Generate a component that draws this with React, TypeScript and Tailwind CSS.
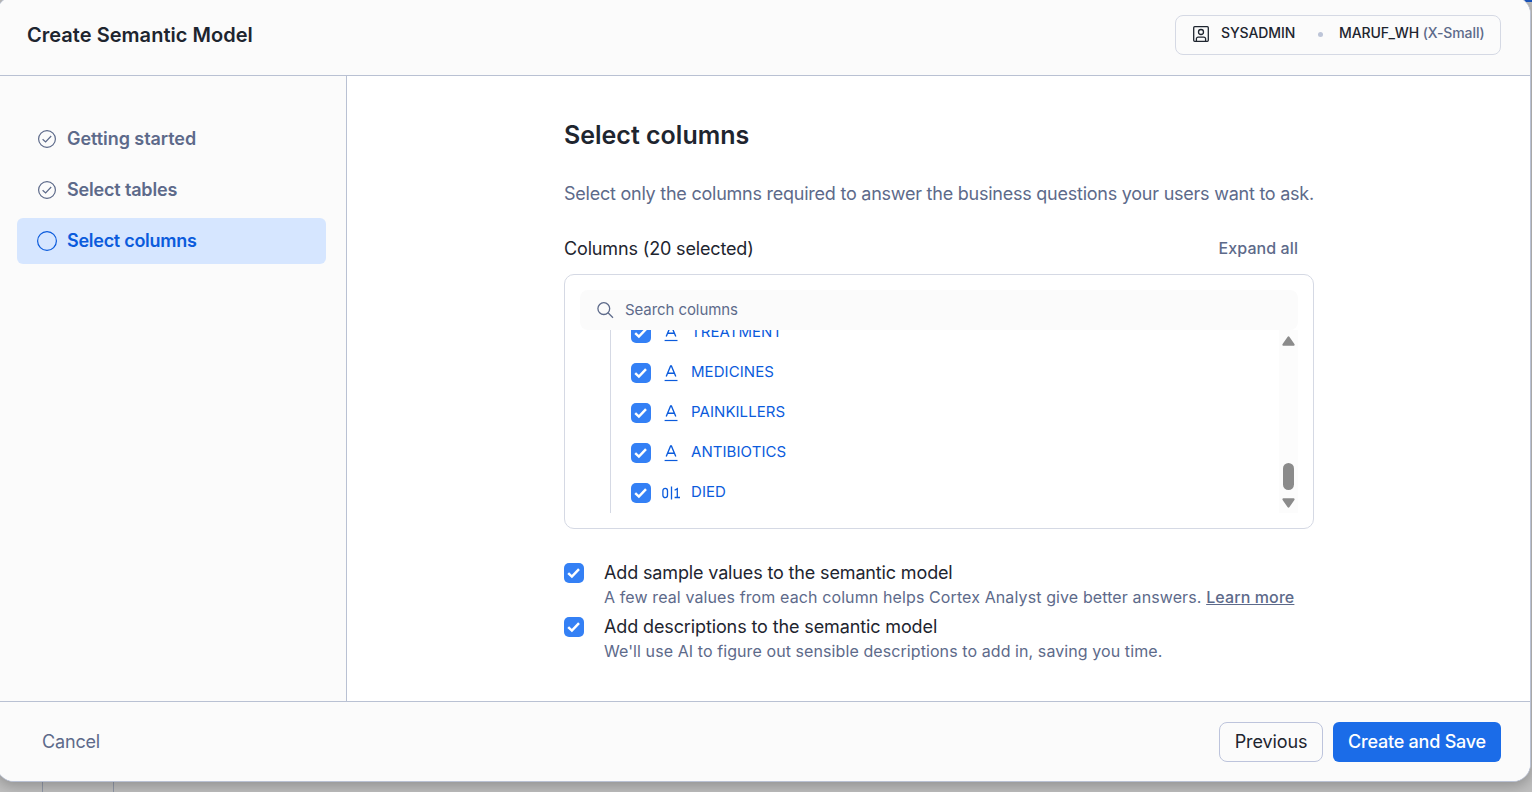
import React from "react";

type IconProps = { className?: string };

const CheckedBox = ({ className = "" }: IconProps) => (
  <span className={`flex h-5 w-5 shrink-0 items-center justify-center rounded-[5px] bg-[#3480f5] ${className}`}>
    <svg width="14" height="12" viewBox="0 0 14 12" fill="none" stroke="#fff" strokeWidth="2.5">
      <path d="M1.2 6.2 4.9 9.6 12 2.2" />
    </svg>
  </span>
);

const StepDone = () => (
  <svg className="h-5 w-5 shrink-0" viewBox="0 0 20 20" fill="none" stroke="#5d6a8a" strokeWidth="1.2">
    <circle cx="10" cy="10" r="8.4" />
    <path d="M5.6 10.2 8.6 13 14.2 7" />
  </svg>
);

const StepCurrent = () => (
  <svg className="h-5 w-5 shrink-0" viewBox="0 0 20 20" fill="none" stroke="#0b5bdc" strokeWidth="1.2">
    <circle cx="10" cy="10" r="9.4" />
  </svg>
);

const RoleIcon = () => (
  <svg className="h-4 w-4 shrink-0" viewBox="0 0 16 16" fill="none" stroke="#1e252f" strokeWidth="1.3">
    <rect x="0.7" y="0.7" width="14.6" height="14.6" rx="1" />
    <circle cx="8" cy="6" r="2.5" />
    <path d="M3.4 15v-2.2a1.7 1.7 0 0 1 1.7-1.7h5.8a1.7 1.7 0 0 1 1.7 1.7V15" />
  </svg>
);

const SearchIcon = () => (
  <svg className="h-[18px] w-[18px] shrink-0" viewBox="0 0 18 18" fill="none" stroke="#5d6a8a" strokeWidth="1.3">
    <circle cx="7.8" cy="7.6" r="5.9" />
    <path d="M12 11.8 17 16.8" />
  </svg>
);

const TextTypeIcon = () => (
  <svg className="h-[18px] w-5 shrink-0" viewBox="0 0 20 18" fill="none" stroke="#0b5bdc" strokeWidth="1.35">
    <path d="M5.2 12.6 9.6 2h.8l4.4 10.6M6.7 9.2h6.6" />
    <path d="M3.6 16.5h12.9" strokeWidth="1.2" />
  </svg>
);

const BooleanTypeIcon = () => (
  <svg className="h-[18px] w-5 shrink-0" viewBox="0 0 20 18" fill="none" stroke="#0b5bdc" strokeWidth="1.3">
    <rect x="1.9" y="4.4" width="4.6" height="9.2" rx="2.3" />
    <path d="M10.5 2.6v12.8M13.6 6.2 16.3 4.6v9M13.6 13.5h5.4" />
  </svg>
);

const steps = [
  { label: "Getting started", done: true, tracking: "tracking-[-0.06px]" },
  { label: "Select tables", done: true, tracking: "tracking-[-0.17px]" },
  { label: "Select columns", done: false, tracking: "tracking-[-0.27px]" },
];

const columns = [
  { name: "TREATMENT", type: "text" },
  { name: "MEDICINES", type: "text" },
  { name: "PAINKILLERS", type: "text" },
  { name: "ANTIBIOTICS", type: "text" },
  { name: "DIED", type: "boolean" },
];

export default function App() {
  return (
    <div className="relative h-[792px] w-[1532px] overflow-hidden bg-[#bfbfbf] font-['Inter',sans-serif] text-[#1e252f]">
      <div className="absolute top-0 right-0 h-0.5 w-5 bg-[#1a56c0]" />
      <div className="absolute bottom-0 left-[42px] h-3 w-[72px] border-x border-x-[#9299a8]" />

      <div className="absolute -top-1 -left-1 flex h-[786px] w-[1535px] flex-col overflow-hidden rounded-[18px] border border-[#b9c1d3] bg-white pt-[3px] pl-[3px] shadow-[0_4px_14px_rgba(0,0,0,0.25)]">
        <header className="flex h-[76px] shrink-0 items-start justify-between border-b border-[#b9c1d3] bg-[#fbfbfb] pr-[29px] pl-[27px]">
          <h1 className="mt-[21px] text-xl leading-7 font-semibold tracking-[0.03px] whitespace-nowrap">Create Semantic Model</h1>
          <div className="mt-[15px] flex h-10 w-[326px] items-center rounded-lg border border-[#d5d9e4] pb-0.5 pl-[17px] text-sm font-medium tracking-[-0.1px] whitespace-nowrap">
            <RoleIcon />
            <span className="mb-0.5 ml-3 w-[97px]">SYSADMIN</span>
            <span className="mr-4 h-[5px] w-[5px] rounded-full bg-[#bdc5d8]" />
            <span className="mb-0.5">
              MARUF_WH <span className="text-[#5d6a8a]">(X-Small)</span>
            </span>
          </div>
        </header>

        <div className="flex h-[625px] shrink-0">
          <nav className="flex w-[347px] shrink-0 flex-col gap-[5px] border-r border-[#b9c1d3] bg-[#fbfbfb] pt-10 pr-5 pl-[17px]">
            {steps.map((step) => (
              <a
                key={step.label}
                className={`flex h-[46px] items-center gap-2.5 rounded-md pl-5 text-lg font-semibold whitespace-nowrap ${step.tracking} ${
                  step.done ? "text-[#5d6a8a]" : "bg-[#d6e6ff] text-[#0b5bdc]"
                }`}
              >
                {step.done ? <StepDone /> : <StepCurrent />}
                {step.label}
              </a>
            ))}
          </nav>

          <main className="flex w-[967px] flex-col pl-[217px] whitespace-nowrap">
            <h2 className="mt-[41px] text-[25px] leading-9 font-semibold">Select columns</h2>
            <p className="mt-[27px] text-lg leading-7 tracking-[-0.24px] text-[#5d6a8a]">
              Select only the columns required to answer the business questions your users want to ask.
            </p>
            <div className="mt-[27px] flex h-7 items-center justify-between pr-4">
              <span className="text-lg tracking-[-0.15px]">Columns (20 selected)</span>
              <span className="mb-0.5 text-base font-medium tracking-[0.08px] text-[#5d6a8a]">Expand all</span>
            </div>

            <section className="mt-[11px] flex h-[255px] w-[750px] flex-col rounded-[10px] border border-[#d5d9e4] px-[15px] pt-[15px]">
              <div className="flex h-10 shrink-0 items-center gap-[11px] rounded-lg bg-[#fbfbfb] pl-4 text-[15px] tracking-[-0.08px] text-[#5d6a8a]">
                <SearchIcon />
                Search columns
              </div>
              <div className="flex h-[183px] overflow-hidden">
                <ul className="ml-[30px] flex flex-1 flex-col border-l border-[#d5d9e4]">
                  {columns.map((column, index) => (
                    <li
                      key={column.name}
                      className={`flex h-10 shrink-0 items-center pl-5 text-[15px] tracking-[0.06px] text-[#0b5bdc] ${index === 0 ? "-mt-[17px]" : ""}`}
                    >
                      <CheckedBox />
                      <span className="ml-2.5">{column.type === "text" ? <TextTypeIcon /> : <BooleanTypeIcon />}</span>
                      <span className="mb-px ml-2.5">{column.name}</span>
                    </li>
                  ))}
                </ul>
                <div className="flex w-[19px] flex-col items-center bg-[#fcfcfc] pt-1.5">
                  <svg width="13" height="10" viewBox="0 0 13 10" fill="#8b8b8b">
                    <path d="M5.5.9a1.2 1.2 0 0 1 2 0l4.9 7.2a1 1 0 0 1-.9 1.6h-10a1 1 0 0 1-.9-1.6z" />
                  </svg>
                  <div className="mt-[117px] h-[27px] w-[11px] rounded-full bg-[#8b8b8b]" />
                  <svg className="mt-2" width="13" height="10" viewBox="0 0 13 10" fill="#8b8b8b">
                    <path d="M5.5 9.1a1.2 1.2 0 0 0 2 0l4.9-7.2a1 1 0 0 0-.9-1.6h-10a1 1 0 0 0-.9 1.6z" />
                  </svg>
                </div>
              </div>
            </section>

            <div className="mt-[30px] flex gap-5">
              <CheckedBox className="mt-1" />
              <div>
                <p className="text-lg leading-7 tracking-[-0.145px]">Add sample values to the semantic model</p>
                <p className="text-base leading-5 tracking-[0.11px] text-[#5d6a8a]">
                  A few real values from each column helps Cortex Analyst give better answers.{" "}
                  <a className="font-medium underline">Learn more</a>
                </p>
              </div>
            </div>
            <div className="mt-1.5 flex gap-5">
              <CheckedBox className="mt-1" />
              <div>
                <p className="text-lg leading-7 tracking-[-0.12px]">Add descriptions to the semantic model</p>
                <p className="text-base leading-5 tracking-[0.085px] text-[#5d6a8a]">
                  We'll use AI to figure out sensible descriptions to add in, saving you time.
                </p>
              </div>
            </div>
          </main>
        </div>

        <footer className="flex h-20 shrink-0 items-center border-t border-[#b9c1d3] bg-[#fbfbfb] pr-[29px] pl-[42px] text-lg whitespace-nowrap">
          <button className="mr-auto tracking-[-0.17px] text-[#5d6a8a]">Cancel</button>
          <button className="h-10 w-[104px] rounded-lg border border-[#bdc4dc] tracking-[-0.1px]">Previous</button>
          <button className="ml-2.5 h-10 w-[168px] rounded-md bg-[#1b6ce8] font-medium tracking-[-0.22px] text-white">Create and Save</button>
        </footer>
      </div>
    </div>
  );
}
